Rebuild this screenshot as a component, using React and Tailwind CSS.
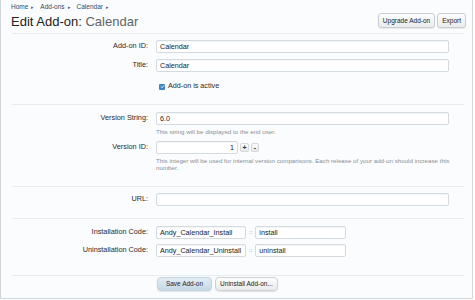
import React from "react";

function Field({ children, className = "" }) {
  return (
    <div
      className={
        "h-[13px] border border-[#d3dae0] rounded-[2px] bg-white text-[7.2px] leading-[11px] px-[3px] text-[#222] shadow-[inset_0_1px_1px_rgba(0,0,0,0.04)] " +
        className
      }
    >
      {children}
    </div>
  );
}

function Label({ children }) {
  return (
    <div className="w-[136px] text-right text-[7.3px] text-[#2a2a2a] shrink-0">
      {children}
    </div>
  );
}

function Crumb({ children }) {
  return (
    <span className="flex items-center gap-[3px]">
      <span>{children}</span>
      <span className="text-[5px] text-[#557]">▸</span>
    </span>
  );
}

export default function App() {
  return (
    <div className="w-[475px] h-[300px] bg-white font-['Liberation_Sans',Arial,sans-serif] overflow-hidden">
      <div className="w-[473px] h-[299px] border-l border-r border-b border-[#d2d7dc] bg-[#fbfcfd]">
        {/* Header */}
        <div className="pl-[10px] pr-[6px] pt-[3px]">
          <div className="flex items-center gap-[6px] h-[8px] text-[6.5px] leading-[8px] text-[#2f4a63]">
            <Crumb>Home</Crumb>
            <Crumb>Add-ons</Crumb>
            <Crumb>Calendar</Crumb>
          </div>
          <div className="flex justify-between items-start mt-[3px] h-[19px]">
            <div className="text-[13px] leading-[16px] text-[#222]">
              Edit Add-on: <span className="text-[#606468]">Calendar</span>
            </div>
            <div className="flex gap-[2px] -mt-[1px]">
              <div className="h-[15px] px-[4px] flex items-center rounded-[3px] border border-[#c9ced3] bg-gradient-to-b from-[#fdfdfd] to-[#e9ebed] text-[6.5px] text-[#222] shadow-[0_1px_1px_rgba(0,0,0,0.08)]">
                Upgrade Add-on
              </div>
              <div className="h-[15px] px-[4px] flex items-center rounded-[3px] border border-[#c9ced3] bg-gradient-to-b from-[#fdfdfd] to-[#e9ebed] text-[6.5px] text-[#222] shadow-[0_1px_1px_rgba(0,0,0,0.08)]">
                Export
              </div>
            </div>
          </div>
        </div>

        {/* Form */}
        <div className="ml-[11px] mr-[8px]">
          {/* Section A */}
          <div className="border-t border-[#e6ecf0] pt-[6px] pb-[12px]">
            <div className="flex items-center gap-[8px]">
              <Label>Add-on ID:</Label>
              <Field className="w-[293px]">Calendar</Field>
            </div>
            <div className="flex items-center gap-[8px] mt-[6px]">
              <Label>Title:</Label>
              <Field className="w-[293px]">Calendar</Field>
            </div>
            <div className="flex items-center h-[11px] mt-[9px] pl-[147px] gap-[3px]">
              <div className="w-[6px] h-[6px] rounded-[1px] bg-[#3d86c6] flex items-center justify-center">
                <svg width="5" height="5" viewBox="0 0 10 10">
                  <path d="M2 5.2 L4.2 7.4 L8 2.8" stroke="white" strokeWidth="1.8" fill="none" />
                </svg>
              </div>
              <span className="text-[7.2px] text-[#2a2a2a]">Add-on is active</span>
            </div>
          </div>

          {/* Section B */}
          <div className="border-t border-[#e6ecf0] pt-[7px] pb-[15px]">
            <div className="flex items-center gap-[8px]">
              <Label>Version String:</Label>
              <Field className="w-[293px]">6.0</Field>
            </div>
            <div className="pl-[144px] mt-[3px] text-[6.2px] leading-[7px] text-[#8a8f94]">
              This string will be displayed to the end user.
            </div>
            <div className="flex items-center gap-[8px] mt-[6px]">
              <Label>Version ID:</Label>
              <div className="flex items-center gap-[2px]">
                <Field className="w-[82px] text-right">1</Field>
                <div className="w-[9px] h-[9px] rounded-[2px] border border-[#d3d8dd] bg-gradient-to-b from-[#fafafa] to-[#e6e8ea] text-[7px] leading-[7px] font-bold text-[#333] flex items-center justify-center">
                  +
                </div>
                <div className="w-[8px] h-[9px] rounded-[2px] border border-[#d3d8dd] bg-gradient-to-b from-[#fafafa] to-[#e6e8ea] text-[7px] leading-[7px] font-bold text-[#333] flex items-center justify-center">
                  -
                </div>
              </div>
            </div>
            <div className="pl-[144px] mt-[3px] text-[6.2px] leading-[7px] text-[#8a8f94] whitespace-nowrap">
              This integer will be used for internal version comparisons. Each release of your add-on should increase this
              <br />
              number.
            </div>
          </div>

          {/* Section C */}
          <div className="border-t border-[#e6ecf0] pt-[6px] pb-[12px]">
            <div className="flex items-center gap-[8px]">
              <Label>URL:</Label>
              <Field className="w-[293px]"></Field>
            </div>
          </div>

          {/* Section D */}
          <div className="border-t border-[#e6ecf0] pt-[7px] pb-[18px]">
            <div className="flex items-center gap-[8px]">
              <Label>Installation Code:</Label>
              <div className="flex items-center gap-[3px]">
                <Field className="w-[90px]">Andy_Calendar_Install</Field>
                <span className="text-[6px] text-[#666]">::</span>
                <Field className="w-[91px]">install</Field>
              </div>
            </div>
            <div className="flex items-center gap-[8px] mt-[5px]">
              <Label>Uninstallation Code:</Label>
              <div className="flex items-center gap-[3px]">
                <Field className="w-[90px]">Andy_Calendar_Uninstall</Field>
                <span className="text-[6px] text-[#666]">::</span>
                <Field className="w-[91px]">uninstall</Field>
              </div>
            </div>
          </div>

          {/* Section E */}
          <div className="border-t border-[#e6ecf0] pt-[1px] pl-[145px] flex gap-[3px]">
            <div className="h-[14px] w-[55px] flex items-center justify-center rounded-[4px] border border-[#c3d3df] bg-gradient-to-b from-[#e3edf5] to-[#c5d8e7] text-[6.5px] text-[#223] shadow-[0_1px_1px_rgba(0,0,0,0.1)]">
              Save Add-on
            </div>
            <div className="h-[14px] w-[63px] flex items-center justify-center rounded-[4px] border border-[#cdd2d6] bg-gradient-to-b from-[#fdfdfd] to-[#e8eaec] text-[6.5px] text-[#222] shadow-[0_1px_1px_rgba(0,0,0,0.1)]">
              Uninstall Add-on...
            </div>
          </div>
        </div>
      </div>
    </div>
  );
}
